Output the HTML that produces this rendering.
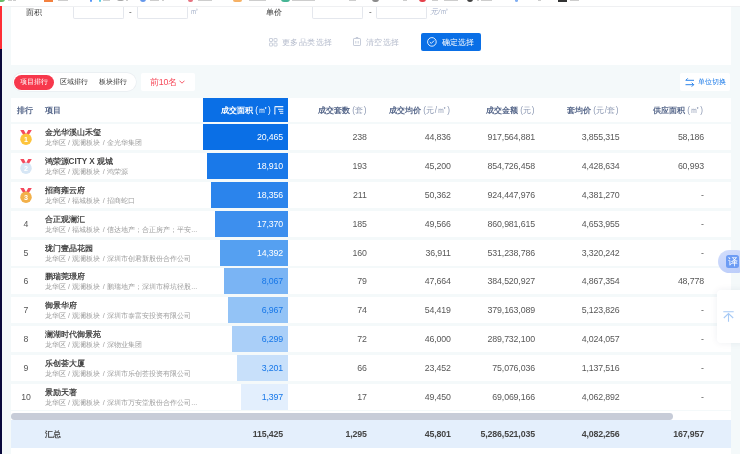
<!DOCTYPE html>
<html><head><meta charset="utf-8">
<style>
*{margin:0;padding:0;box-sizing:border-box}
html,body{-webkit-font-smoothing:antialiased;width:740px;height:454px;overflow:hidden}
body{-webkit-font-smoothing:antialiased;background:#f4f9fa;font-family:"Liberation Sans",sans-serif;position:relative;color:#333}
.abs{position:absolute}
.row,.abs{will-change:transform}
#topbar{left:0;top:0;width:740px;height:7px;background:#fff;border-bottom:1px solid #eff0f2}
.bm{position:absolute;top:-1px;height:2.5px;opacity:0.85;border-radius:0 0 2px 2px}
#lstrip1{left:0;top:6px;width:2.2px;height:43px;background:#fd2e35}
#lstrip2{left:0;top:49px;width:2.2px;height:406px;background:#0a0a3c}
#filter{left:11px;top:7px;width:719.5px;height:58.4px;background:#fff}
.lbl{font-size:8.2px;color:#333;line-height:10px}
.inp{height:11.6px;border:1px solid #e4e7ed;border-top:none;border-radius:0 0 2px 2px;background:#fff}
.unit{font-size:7.8px;color:#a3afc8;line-height:10px;font-style:italic}
.unit b{font-weight:normal;font-size:9.2px;font-style:normal;position:relative;top:-0.3px}
.dash{font-size:8px;color:#333;line-height:10px;margin-top:-1px}
.lnk{font-size:8px;color:#b3bacb;line-height:10px;letter-spacing:0.4px}
#okbtn{left:420.5px;top:32.7px;width:60.3px;height:18.4px;background:#0a6fe6;border-radius:2px;color:#fff;font-size:8.2px;line-height:18.4px}
#tabs{left:13px;top:72.8px;width:123px;height:18px;background:#fff;border-radius:9px;box-shadow:0 0 0 0.7px #e9edf1}
#tab1{left:1.2px;top:2.2px;width:40px;height:14.5px;background:#f7384c;border-radius:7.5px;color:#fff;font-size:7.3px;line-height:14.5px;text-align:center}
.tabt{font-size:7.3px;color:#333;line-height:18.4px;top:0}
#top10{left:141px;top:72.9px;width:54px;height:18px;background:#fff;border-radius:2px;color:#f64a5a;font-size:8.8px;line-height:18px;letter-spacing:-0.2px}
#unitbtn{left:680.4px;top:72.7px;width:50px;height:18.3px;background:#fff;border-radius:2px;color:#1677e8;font-size:7px;line-height:18.3px}
#thead{left:11px;top:97.9px;width:719.5px;height:23.6px;background:#fff}
.th{font-size:8.2px;font-weight:bold;color:#56678a;line-height:23.6px;top:0.7px;white-space:nowrap}
.th i{font-style:normal;font-weight:normal;color:#8d99b3;letter-spacing:0.35px}
.th i b{font-weight:normal;font-size:9.6px;letter-spacing:0;line-height:0}
#bluehead{left:192.2px;top:0;width:84.8px;height:23.6px;background:#0a6fe6}
.row{position:absolute;left:11px;width:719.5px;height:25.9px;background:#fff}
.rank{position:absolute;left:0;top:0;width:30px;height:25.9px}
.medal{position:absolute;left:7.6px;top:4.9px}
.rk{position:absolute;left:0;width:30px;text-align:center;top:8px;font-size:8.7px;color:#555;line-height:10px}
.proj{position:absolute;left:33.6px;top:0;width:155px;height:25.9px;overflow:hidden;white-space:nowrap}
.proj .t{position:absolute;top:4px;font-size:8.2px;font-weight:bold;color:#474747;line-height:10px}
.proj .s{position:absolute;top:14px;font-size:7.2px;color:#9e9e9e;line-height:9px;word-spacing:0.4px}
.bar{position:absolute;right:443px;top:0;height:25.9px;text-align:right;padding-right:4.5px;font-size:8.8px;line-height:27.4px;letter-spacing:-0.15px}
.n{position:absolute;top:0;height:25.9px;text-align:right;font-size:8.8px;line-height:27.4px;color:#585858;letter-spacing:-0.15px;width:84px}
.c1{left:271.7px}.c2{left:355.8px}.c3{left:439.9px}.c4{left:524.5px}.c5{left:608.9px}
#sbt{left:11px;top:410.8px;width:719.5px;height:9px;background:#fff}
#sb{left:11px;top:412.6px;width:662.3px;height:6.8px;background:#c7ccd8;border-radius:3.4px}
#sum{left:11px;top:419.7px;width:719.5px;height:28.2px;background:#e4effc}
#sum .n{font-weight:bold;height:28.2px;line-height:28.8px;color:#444}
#bot{left:11px;top:447.9px;width:719.5px;height:7px;background:#fff}
#xl{left:717.9px;top:249.6px;width:30px;height:23.2px;border-radius:11.6px;background:linear-gradient(160deg,#d3defc,#b9cbf9)}
#xl span{position:absolute;left:8.2px;top:5.2px;width:12.7px;height:13.1px;background:#6d9cf4;border-radius:2.5px;color:#fff;font-size:10px;line-height:13.1px;text-align:center}
#totop{left:717.3px;top:290px;width:30px;height:53.2px;background:#fff;border-radius:4px;box-shadow:0 0 7px rgba(30,40,80,0.07)}
</style></head><body>
<div id="topbar" class="abs">
<div class="bm" style="left:0;width:5px;background:#4caf50;border-radius:0 0 3px 0"></div>
<div class="bm" style="left:44px;width:9px;background:#f26b1d;border-radius:0"></div>
<div class="bm" style="left:90px;width:2px;background:#3b82f6"></div>
<div class="bm" style="left:99px;width:2px;background:#3cc5e0"></div>
<div class="bm" style="left:117px;width:7px;background:#9a9a9a;height:1.8px"></div>
<div class="bm" style="left:140px;width:6px;background:#4a86e8;border-radius:0 0 3px 3px"></div>
<div class="bm" style="left:188px;width:5px;background:#e35a6a"></div>
<div class="bm" style="left:233px;width:9px;background:#f5a34a"></div>
<div class="bm" style="left:281px;width:9px;background:#27a882;border-radius:0 0 3px 3px"></div>
<div class="bm" style="left:372px;width:7px;background:#777;border-radius:0 0 3.5px 3.5px"></div>
<div class="bm" style="left:419px;width:7px;background:#e0202c;border-radius:0 0 3.5px 3.5px"></div>
<div class="bm" style="left:467px;width:6px;background:#222;border-radius:0 0 3px 3px"></div>
<div class="bm" style="left:515px;width:3px;background:#6aa0f0"></div>
<div class="bm" style="left:558px;width:9px;background:#111;border-radius:0"></div>
<div class="bm" style="left:8px;width:4px;background:#c4c4c4;height:2px;border-radius:0"></div>
<div class="bm" style="left:13px;width:3px;background:#c4c4c4;height:2px;border-radius:0"></div>
<div class="bm" style="left:58px;width:10px;background:#c4c4c4;height:2px;border-radius:0"></div>
<div class="bm" style="left:103px;width:7px;background:#c4c4c4;height:2px;border-radius:0"></div>
<div class="bm" style="left:126px;width:2px;background:#c4c4c4;height:2px;border-radius:0"></div>
<div class="bm" style="left:150px;width:9px;background:#c4c4c4;height:2px;border-radius:0"></div>
<div class="bm" style="left:162px;width:2px;background:#c4c4c4;height:2px;border-radius:0"></div>
<div class="bm" style="left:198px;width:14px;background:#c4c4c4;height:2px;border-radius:0"></div>
<div class="bm" style="left:249px;width:17px;background:#c4c4c4;height:2px;border-radius:0"></div>
<div class="bm" style="left:292px;width:23px;background:#c4c4c4;height:2px;border-radius:0"></div>
<div class="bm" style="left:349px;width:7px;background:#c4c4c4;height:2px;border-radius:0"></div>
<div class="bm" style="left:403px;width:4px;background:#c4c4c4;height:2px;border-radius:0"></div>
<div class="bm" style="left:432px;width:6px;background:#c4c4c4;height:2px;border-radius:0"></div>
<div class="bm" style="left:444px;width:14px;background:#c4c4c4;height:2px;border-radius:0"></div>
<div class="bm" style="left:477px;width:2px;background:#c4c4c4;height:2px;border-radius:0"></div>
<div class="bm" style="left:481px;width:11px;background:#c4c4c4;height:2px;border-radius:0"></div>
<div class="bm" style="left:538px;width:3px;background:#c4c4c4;height:2px;border-radius:0"></div>
<div class="bm" style="left:570px;width:9px;background:#c4c4c4;height:2px;border-radius:0"></div>
</div>
<div id="lstrip1" class="abs"></div>
<div id="lstrip2" class="abs"></div>

<div id="filter" class="abs">
  <div class="abs lbl" style="left:14.7px;top:1px">面积</div>
  <div class="abs inp" style="left:61.7px;top:0;width:51px"></div>
  <div class="abs dash" style="left:118px;top:1px">-</div>
  <div class="abs inp" style="left:126px;top:0;width:51px"></div>
  <div class="abs unit" style="left:179px;top:-1px"><b>㎡</b></div>
  <div class="abs lbl" style="left:254.6px;top:1px">单价</div>
  <div class="abs inp" style="left:301.4px;top:0;width:51px"></div>
  <div class="abs dash" style="left:357.6px;top:1px">-</div>
  <div class="abs inp" style="left:365.3px;top:0;width:51px"></div>
  <div class="abs unit" style="left:419px;top:-1px">元/<b>㎡</b></div>

  <svg class="abs" style="left:257.5px;top:30.5px" width="8.5" height="8.5" viewBox="0 0 9 9" fill="none" stroke="#bcc3d2" stroke-width="0.85">
    <rect x="0.5" y="0.5" width="3.2" height="3.2" rx="0.5"/><rect x="5.3" y="0.5" width="3.2" height="3.2" rx="0.5"/>
    <rect x="0.5" y="5.3" width="3.2" height="3.2" rx="0.5"/><rect x="5.3" y="5.3" width="3.2" height="3.2" rx="0.5"/>
  </svg>
  <div class="abs lnk" style="left:271px;top:30.6px">更多品类选择</div>
  <svg class="abs" style="left:342.3px;top:30.3px" width="8" height="9" viewBox="0 0 8 9" fill="none" stroke="#bcc3d2" stroke-width="0.85">
    <rect x="0.5" y="1.5" width="7" height="7" rx="0.6"/><path d="M2.8 0.5h2.4M2.8 4v2.5M5.2 4v2.5"/>
  </svg>
  <div class="abs lnk" style="left:355.3px;top:30.6px">清空选择</div>
</div>
<div id="okbtn" class="abs">
  <svg class="abs" style="left:6.3px;top:4.1px" width="9.8" height="9.8" viewBox="0 0 10 10" fill="none" stroke="#fff" stroke-width="0.9">
    <circle cx="5" cy="5" r="4.4"/><path d="M2.8 5.1 L4.4 6.6 L7.3 3.6"/>
  </svg>
  <span class="abs" style="left:20.8px;top:0.9px">确定选择</span>
</div>

<div id="tabs" class="abs">
  <div id="tab1" class="abs">项目排行</div>
  <div class="abs tabt" style="left:47px">区域排行</div>
  <div class="abs tabt" style="left:86px">板块排行</div>
</div>
<div id="top10" class="abs"><span class="abs" style="left:9px;top:0">前10名</span>
  <svg class="abs" style="left:38px;top:7.3px" width="6" height="4" viewBox="0 0 6 4" fill="none" stroke="#f64a5a" stroke-width="0.9"><path d="M0.5 0.7 L3 3.2 L5.5 0.7"/></svg>
</div>
<div id="unitbtn" class="abs">
  <svg class="abs" style="left:4.7px;top:4.5px" width="9.5" height="9" viewBox="0 0 9.5 9" fill="none" stroke="#1677e8" stroke-width="0.9">
    <path d="M9 2.3 H0.8 M2.8 0.3 L0.8 2.3"/><path d="M0.5 6.7 H8.7 M6.7 4.7 L8.7 6.7 L6.7 8.7"/>
  </svg>
  <span class="abs" style="left:17.5px;top:0">单位切换</span>
</div>

<div id="thead" class="abs">
  <div class="abs th" style="left:6px">排行</div>
  <div class="abs th" style="left:33.6px">项目</div>
  <div id="bluehead" class="abs">
    <div class="abs th" style="left:18px;color:#fff">成交面积 <i style="color:#fff;letter-spacing:0.1px">(<b>㎡</b>)</i></div>
    <svg class="abs" style="left:71px;top:8px" width="10" height="9" viewBox="0 0 10 9" fill="none" stroke="#fff" stroke-width="1">
      <path d="M0.9 1.2 V8.3 L0.2 7.5"/><path d="M0.6 0.7 H9.3" stroke-width="1.2"/><path d="M4 3.3 H9.3 M5 5.3 H9.3 M6 7.3 H9.3" stroke-width="0.9"/>
    </svg>
  </div>
  <div class="abs th" style="right:364px">成交套数 <i>(套)</i></div>
  <div class="abs th" style="right:280px">成交均价 <i>(元/<b>㎡</b>)</i></div>
  <div class="abs th" style="right:196px">成交金额 <i>(元)</i></div>
  <div class="abs th" style="right:111.7px">套均价 <i>(元/套)</i></div>
  <div class="abs th" style="right:27.2px">供应面积 <i>(<b>㎡</b>)</i></div>
</div>

<div class="row" style="top:123.90px">
<div class="rank"><svg class="medal" width="14" height="18" viewBox="0 0 14 18">
<path d="M1.2 0.9 L4.8 0.9 L7.2 5.6 L4.5 6.6 Z" fill="#f44a5e"/>
<path d="M12.8 0.9 L9.2 0.9 L6.8 5.6 L9.5 6.6 Z" fill="#f44a5e"/>
<circle cx="7" cy="10.2" r="5.75" fill="#fdc43c"/>
<text x="7.1" y="12.9" text-anchor="middle" font-size="7.2" font-weight="bold" fill="#fff" font-family="Liberation Sans, sans-serif">1</text>
</svg></div>
<div class="proj"><div class="t">金光华溪山禾玺</div><div class="s">龙华区 / 观澜板块 / 金光华集团</div></div>
<div class="bar" style="width:84.80px;background:#0a6fe6;color:#fff">20,465</div>
<div class="n c1">238</div><div class="n c2">44,836</div><div class="n c3">917,564,881</div><div class="n c4">3,855,315</div><div class="n c5">58,186</div>
</div>
<div class="row" style="top:152.80px">
<div class="rank"><svg class="medal" width="14" height="18" viewBox="0 0 14 18">
<path d="M1.2 0.9 L4.8 0.9 L7.2 5.6 L4.5 6.6 Z" fill="#f44a5e"/>
<path d="M12.8 0.9 L9.2 0.9 L6.8 5.6 L9.5 6.6 Z" fill="#f44a5e"/>
<circle cx="7" cy="10.2" r="5.75" fill="#d6e6f5"/>
<text x="7.1" y="12.9" text-anchor="middle" font-size="7.2" font-weight="bold" fill="#fff" font-family="Liberation Sans, sans-serif">2</text>
</svg></div>
<div class="proj"><div class="t">鸿荣源CITY X 观城</div><div class="s">龙华区 / 观澜板块 / 鸿荣源</div></div>
<div class="bar" style="width:80.56px;background:#1a79e9;color:#fff">18,910</div>
<div class="n c1">193</div><div class="n c2">45,200</div><div class="n c3">854,726,458</div><div class="n c4">4,428,634</div><div class="n c5">60,993</div>
</div>
<div class="row" style="top:181.70px">
<div class="rank"><svg class="medal" width="14" height="18" viewBox="0 0 14 18">
<path d="M1.2 0.9 L4.8 0.9 L7.2 5.6 L4.5 6.6 Z" fill="#f44a5e"/>
<path d="M12.8 0.9 L9.2 0.9 L6.8 5.6 L9.5 6.6 Z" fill="#f44a5e"/>
<circle cx="7" cy="10.2" r="5.75" fill="#f2b04a"/>
<text x="7.1" y="12.9" text-anchor="middle" font-size="7.2" font-weight="bold" fill="#fff" font-family="Liberation Sans, sans-serif">3</text>
</svg></div>
<div class="proj"><div class="t">招商雍云府</div><div class="s">龙华区 / 福城板块 / 招商蛇口</div></div>
<div class="bar" style="width:76.32px;background:#2b84ec;color:#fff">18,356</div>
<div class="n c1">211</div><div class="n c2">50,362</div><div class="n c3">924,447,976</div><div class="n c4">4,381,270</div><div class="n c5">-</div>
</div>
<div class="row" style="top:210.60px">
<div class="rank"><span class="rk">4</span></div>
<div class="proj"><div class="t">合正观澜汇</div><div class="s">龙华区 / 福城板块 / 信达地产；合正房产；平安...</div></div>
<div class="bar" style="width:72.08px;background:#3d8fee;color:#fff">17,370</div>
<div class="n c1">185</div><div class="n c2">49,566</div><div class="n c3">860,981,615</div><div class="n c4">4,653,955</div><div class="n c5">-</div>
</div>
<div class="row" style="top:239.50px">
<div class="rank"><span class="rk">5</span></div>
<div class="proj"><div class="t">珑门壹品花园</div><div class="s">龙华区 / 观澜板块 / 深圳市创君新股份合作公司</div></div>
<div class="bar" style="width:67.84px;background:#55a0f1;color:#fff">14,392</div>
<div class="n c1">160</div><div class="n c2">36,911</div><div class="n c3">531,238,786</div><div class="n c4">3,320,242</div><div class="n c5">-</div>
</div>
<div class="row" style="top:268.40px">
<div class="rank"><span class="rk">6</span></div>
<div class="proj"><div class="t">鹏瑞莞璟府</div><div class="s">龙华区 / 观澜板块 / 鹏瑞地产；深圳市樟坑径股...</div></div>
<div class="bar" style="width:63.60px;background:#7ab4f4;color:#1677e8">8,067</div>
<div class="n c1">79</div><div class="n c2">47,664</div><div class="n c3">384,520,927</div><div class="n c4">4,867,354</div><div class="n c5">48,778</div>
</div>
<div class="row" style="top:297.30px">
<div class="rank"><span class="rk">7</span></div>
<div class="proj"><div class="t">御景华府</div><div class="s">龙华区 / 观澜板块 / 深圳市泰富安投资有限公司</div></div>
<div class="bar" style="width:59.36px;background:#93c3f6;color:#1677e8">6,967</div>
<div class="n c1">74</div><div class="n c2">54,419</div><div class="n c3">379,163,089</div><div class="n c4">5,123,826</div><div class="n c5">-</div>
</div>
<div class="row" style="top:326.20px">
<div class="rank"><span class="rk">8</span></div>
<div class="proj"><div class="t">澜湖时代御景苑</div><div class="s">龙华区 / 观澜板块 / 深物业集团</div></div>
<div class="bar" style="width:55.12px;background:#aacff8;color:#1677e8">6,299</div>
<div class="n c1">72</div><div class="n c2">46,000</div><div class="n c3">289,732,100</div><div class="n c4">4,024,057</div><div class="n c5">-</div>
</div>
<div class="row" style="top:355.10px">
<div class="rank"><span class="rk">9</span></div>
<div class="proj"><div class="t">乐创荟大厦</div><div class="s">龙华区 / 观澜板块 / 深圳市乐创荟投资有限公司</div></div>
<div class="bar" style="width:50.88px;background:#c8e0fa;color:#1677e8">3,201</div>
<div class="n c1">66</div><div class="n c2">23,452</div><div class="n c3">75,076,036</div><div class="n c4">1,137,516</div><div class="n c5">-</div>
</div>
<div class="row" style="top:384.00px">
<div class="rank"><span class="rk">10</span></div>
<div class="proj"><div class="t">景励天著</div><div class="s">龙华区 / 观澜板块 / 深圳市万安堂股份合作公司...</div></div>
<div class="bar" style="width:46.64px;background:#e3effd;color:#1677e8">1,397</div>
<div class="n c1">17</div><div class="n c2">49,450</div><div class="n c3">69,069,166</div><div class="n c4">4,062,892</div><div class="n c5">-</div>
</div>

<div id="sbt" class="abs"></div><div id="sb" class="abs"></div>
<div id="sum" class="abs">
  <div class="abs th" style="left:33.6px;line-height:28.2px;color:#3e3e3e">汇总</div>
  <div class="n" style="left:188px">115,425</div>
  <div class="n c1">1,295</div><div class="n c2">45,801</div><div class="n c3">5,286,521,035</div><div class="n c4">4,082,256</div><div class="n c5">167,957</div>
</div>
<div id="bot" class="abs"></div>
<div id="xl" class="abs"><span>译</span></div>
<div id="totop" class="abs">
  <svg class="abs" style="left:6.2px;top:20.6px" width="11" height="11" viewBox="0 0 11 11" fill="none" stroke="#a6c9f5" stroke-width="1.1">
    <path d="M0.3 0.8 H10.7 M5.5 2.6 V10.8 M0.8 7 L5.5 2.6 L10.2 7"/>
  </svg>
</div>
</body></html>
